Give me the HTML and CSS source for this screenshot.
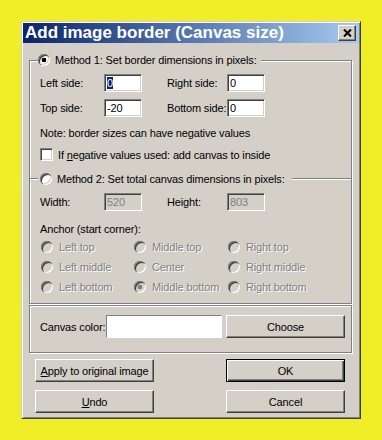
FILE: index.html
```html
<!DOCTYPE html>
<html lang="en">
<head>
<meta charset="UTF-8">
<title>Add image border (Canvas size)</title>
<link rel="stylesheet" href="styles.css">
</head>
<body>
<div class="dialog">
  <div class="titlebar">
    <span class="title">Add image border (Canvas size)</span>
    <span class="close">
      <svg width="9" height="8" viewBox="0 0 9 8"><path d="M1 0.5 L8 7.5 M8 0.5 L1 7.5" stroke="#000" stroke-width="2" fill="none"/></svg>
    </span>
  </div>

  <div class="content">
    <!-- method 1 / method 2 -->
    <div class="group g1">
      <div class="legend"><span class="radio on"></span><span>Method 1: Set border dimensions in pixels:</span></div>

      <div class="pair r1">
        <span class="lbl l1">Left side:</span>
        <span class="field"><span class="sel">0</span></span>
        <span class="lbl l2">Right side:</span>
        <span class="field">0</span>
      </div>
      <div class="pair r2">
        <span class="lbl l1">Top side:</span>
        <span class="field">-20</span>
        <span class="lbl l2">Bottom side:</span>
        <span class="field">0</span>
      </div>

      <div class="note">Note: border sizes can have negative values</div>
      <div class="checkrow"><span class="check"></span><span>If <u>n</u>egative values used: add canvas to inside</span></div>

      <div class="divider">
        <span class="line short"></span>
        <span class="legend2"><span class="radio"></span><span>Method 2: Set total canvas dimensions in pixels:</span></span>
        <span class="line"></span>
      </div>

      <div class="pair r3">
        <span class="lbl l1">Width:</span>
        <span class="field off">520</span>
        <span class="lbl l2">Height:</span>
        <span class="field off">803</span>
      </div>

      <div class="anchor">Anchor (start corner):</div>
      <div class="anchors">
        <div class="opt"><span class="radio off"></span><span>Left top</span></div>
        <div class="opt"><span class="radio off"></span><span>Middle top</span></div>
        <div class="opt"><span class="radio off"></span><span>Right top</span></div>
        <div class="opt"><span class="radio off"></span><span>Left middle</span></div>
        <div class="opt"><span class="radio off"></span><span>Center</span></div>
        <div class="opt"><span class="radio off"></span><span>Right middle</span></div>
        <div class="opt"><span class="radio off"></span><span>Left bottom</span></div>
        <div class="opt"><span class="radio off on"></span><span>Middle bottom</span></div>
        <div class="opt"><span class="radio off"></span><span>Right bottom</span></div>
      </div>
    </div>

    <!-- canvas colour -->
    <div class="group g3">
      <div class="colorrow">
        <span class="lbl">Canvas color:</span>
        <span class="swatch"></span>
        <span class="btn choose">Choose</span>
      </div>
    </div>

    <div class="btnrow first">
      <span class="btn"><u>A</u>pply to original image</span>
      <span class="btn default">OK</span>
    </div>
    <div class="btnrow">
      <span class="btn"><u>U</u>ndo</span>
      <span class="btn">Cancel</span>
    </div>
  </div>
</div>
</body>
</html>
```

FILE: styles.css
```css
*{box-sizing:border-box;}
body{margin:0;background:#f0ee28;font-family:"Liberation Sans",Arial,sans-serif;font-size:11px;letter-spacing:-0.15px;color:#000;}

.dialog{margin:21px 0 0 21px;width:340px;height:398px;padding:1px;background:#d4d0c8;
  border:1px solid;border-color:#d4d0c8 #404040 #404040 #d4d0c8;
  box-shadow:inset 1px 1px #fff,inset -1px -1px #808080;}

.titlebar{height:20px;display:flex;align-items:center;justify-content:space-between;padding:0 3px 0 2px;
  background:linear-gradient(90deg,#0a246a,#a6caf0);}
.title{color:#fff;font-weight:bold;font-size:17px;letter-spacing:0;line-height:20px;white-space:nowrap;}
.close{width:18px;height:16px;display:flex;align-items:center;justify-content:center;background:#d4d0c8;
  border:1px solid;border-color:#fff #404040 #404040 #fff;box-shadow:inset -1px -1px #808080;}

.content{padding:17px 7px 0 6px;}

.group{border:1px solid #808080;box-shadow:inset 1px 1px #fff,1px 1px #fff;padding-left:10px;}
.g1{padding-bottom:9px;}
.g3{margin-top:1px;padding-top:9px;padding-bottom:14px;}

.legend{display:flex;align-items:center;gap:5px;width:fit-content;height:14px;margin:-8px 0 0 -2px;padding:0 4px 0 0;background:#d4d0c8;}
.legend,.legend2,.checkrow,.opt{white-space:nowrap;}

.radio{flex:none;width:12px;height:12px;border-radius:50%;background:#fff;
  box-shadow:inset 1px 1px #808080,inset 2px 2px #404040,inset -1px -1px #fff,inset -2px -2px #d4d0c8;}
.radio.on{background:radial-gradient(circle,#000 0 2px,#fff 2.6px);}
.radio.off{background:#d4d0c8;}
.radio.off.on{background:radial-gradient(circle,#808080 0 2px,#d4d0c8 2.6px);}

.pair{display:flex;align-items:center;height:18px;}
.r1{margin-top:7px;}
.r2{margin-top:7px;}
.r3{margin-top:7px;}
.l1{width:64px;}
.l2{width:60px;margin-left:25px;}

.field{display:block;width:38px;height:18px;padding-left:2px;line-height:16px;background:#fff;
  border:1px solid;border-color:#808080 #fff #fff #808080;box-shadow:inset 1px 1px #404040,inset -1px -1px #d4d0c8;}
.field.off{background:#d4d0c8;color:#808080;}
.sel{background:#0a246a;color:#fff;}

.note{margin-top:9px;line-height:14px;}
.checkrow{display:flex;align-items:center;gap:5px;height:13px;margin-top:8px;}
.check{flex:none;width:13px;height:13px;background:#fff;
  border:1px solid;border-color:#808080 #fff #fff #808080;box-shadow:inset 1px 1px #404040,inset -1px -1px #d4d0c8;}

.divider{display:flex;align-items:center;height:14px;margin:11px 0 0 -10px;}
.line{flex:1;height:0;border-top:1px solid #808080;border-bottom:1px solid #fff;}
.line.short{flex:none;width:8px;}
.legend2{display:flex;align-items:center;gap:5px;padding:0 7px 0 2px;}

.anchor{margin-top:11px;line-height:14px;}
.anchors{display:grid;grid-template-columns:93px 94px auto;row-gap:6px;margin-top:4px;}
.opt{display:flex;align-items:center;gap:6px;height:14px;padding-left:1px;color:#808080;text-shadow:1px 1px #fff;}

.colorrow{display:flex;align-items:center;height:23px;}
.colorrow .lbl{width:66px;}
.swatch{width:116px;height:23px;background:#fff;border:1px solid;border-color:#808080 #fff #fff #808080;}

.btn{display:flex;align-items:center;justify-content:center;width:119px;height:23px;background:#d4d0c8;
  border:1px solid;border-color:#fff #404040 #404040 #fff;box-shadow:inset -1px -1px #808080;}
.choose{margin-left:4px;}
.btn.default{border-color:#000;box-shadow:inset 1px 1px #fff,inset -1px -1px #404040,inset -2px -2px #808080;}

.btnrow{display:flex;justify-content:space-between;padding:0 7px 0 6px;margin-top:8px;}
.btnrow.first{margin-top:6px;}
```
